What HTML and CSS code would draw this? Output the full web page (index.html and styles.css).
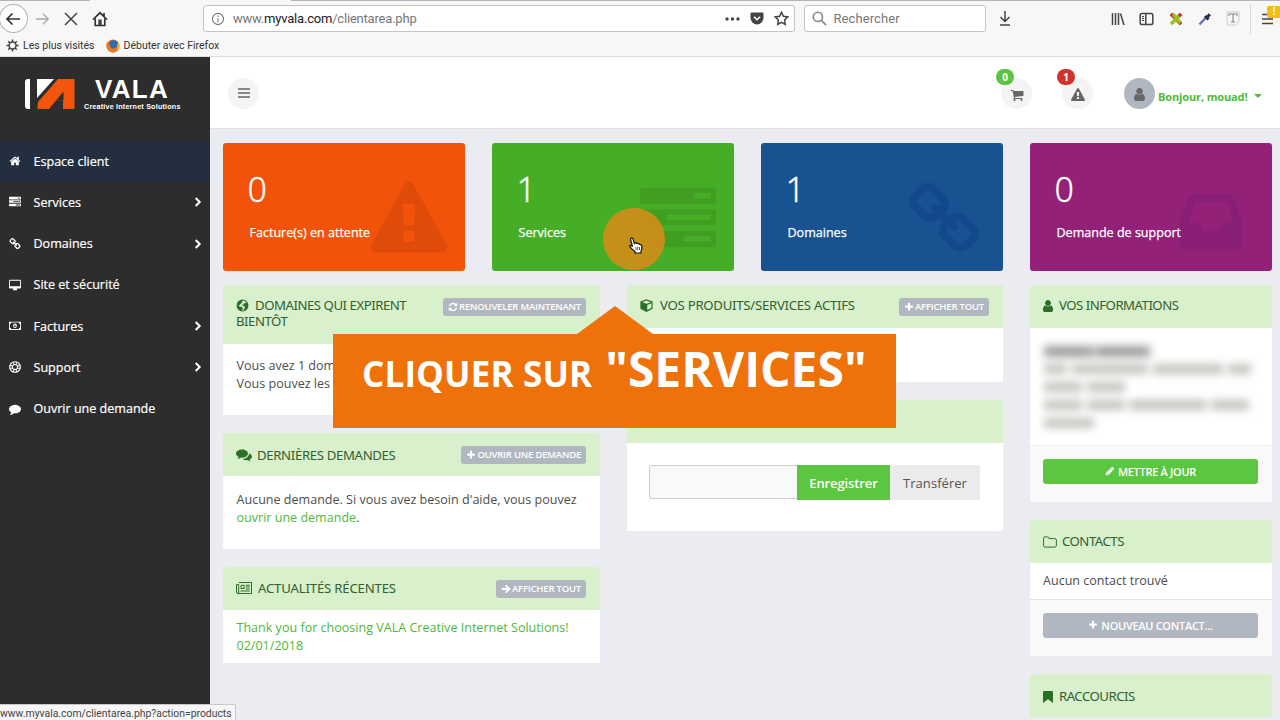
FILE: index.html
```html
<!DOCTYPE html>
<html lang="fr">
<head>
    <meta charset="UTF-8">
    <title>Espace client - VALA</title>
    <link rel="stylesheet" href="styles.css">
</head>
<body>
    <!-- icon set -->
    <svg class="sprite" xmlns="http://www.w3.org/2000/svg">
        <symbol id="i-home" viewBox="0 0 1792 1792"><path d="M1472 992v480q0 26-19 45t-45 19h-384v-384h-256v384h-384q-26 0-45-19t-19-45v-480q0-1 .5-3t.5-3l575-474 575 474q1 2 1 6zm223-69l-62 74q-8 9-21 11h-3q-13 0-21-7l-692-577-692 577q-12 8-24 7-13-2-21-11l-62-74q-8-10-7-23.5t11-21.5l719-599q32-26 76-26t76 26l244 204v-195q0-14 9-23t23-9h192q14 0 23 9t9 23v408l219 182q10 8 11 21.5t-7 23.5z"/></symbol>
        <symbol id="i-tasks" viewBox="0 0 1792 1792"><path fill-rule="evenodd" d="M64 128h1664q64 0 64 64v256q0 64-64 64H64q-64 0-64-64V192q0-64 64-64zm1216 128v128h384V256zM64 640h1664q64 0 64 64v256q0 64-64 64H64q-64 0-64-64V704q0-64 64-64zm576 128v128h1024V768zM64 1152h1664q64 0 64 64v256q0 64-64 64H64q-64 0-64-64v-256q0-64 64-64zm960 128v128h640v-128z"/></symbol>
        <symbol id="i-chain" viewBox="0 0 1792 1792"><path d="M1520 1216q0-40-28-68l-208-208q-28-28-68-28-42 0-72 32 3 3 19 18.5t21.5 21.5 15 19 13 25.5 3.5 27.5q0 40-28 68t-68 28q-15 0-27.5-3.5t-25.5-13-19-15-21.5-21.5-18.5-19q-33 31-33 73 0 40 28 68l206 207q27 27 68 27 40 0 68-26l147-146q28-28 28-67zm-703-705q0-40-28-68l-206-207q-28-28-68-28-39 0-68 27l-147 146q-28 28-28 67 0 40 28 68l208 208q27 27 68 27 42 0 72-31-3-3-19-18.5t-21.5-21.5-15-19-13-25.5-3.5-27.5q0-40 28-68t68-28q15 0 27.5 3.5t25.5 13 19 15 21.5 21.5 18.5 19q33-31 33-73zm895 705q0 120-85 203l-147 146q-83 83-203 83-121 0-204-85l-206-207q-83-83-83-203 0-123 88-209l-88-88q-86 88-208 88-120 0-204-84l-208-208q-84-84-84-204t85-203l147-146q83-83 203-83 121 0 204 85l206 207q83 83 83 203 0 123-88 209l88 88q86-88 208-88 120 0 204 84l208 208q84 84 84 204z"/></symbol>
        <symbol id="i-desktop" viewBox="0 0 14 14"><path fill-rule="evenodd" d="M1.2 1h11.6q1.2 0 1.2 1.2v7.6q0 1.2-1.2 1.2H9l.6 2H4.4L5 11H1.2Q0 11 0 9.8V2.2Q0 1 1.2 1zM1 2v6.6h12V2z"/></symbol>
        <symbol id="i-money" viewBox="0 0 14 14"><path fill-rule="evenodd" d="M0 2h14v9.600H0zM2.600 3Q2.600 4.600 1 4.600V9q1.600 0 1.600 1.600h8.800Q11.400 9 13 9V4.600q-1.600 0-1.600-1.600z"/><path fill-rule="evenodd" d="M7 4.200a2.200 2.600 0 0 1 0 5.200a2.200 2.600 0 0 1 0-5.200zm-.6 1.200v2.300H6v.6h2v-.6h-.5V5.400z"/></symbol>
        <symbol id="i-life" viewBox="0 0 14 14"><circle cx="7" cy="7" r="6.200" fill="none" stroke="currentColor" stroke-width="1.300"/><circle cx="7" cy="7" r="3" fill="none" stroke="currentColor" stroke-width="1.200"/><path d="M5 .8h1v3.600H5zM8 .8h1v3.600H8zM5 9.600h1v3.600H5zM8 9.600h1v3.600H8zM.8 5v1h3.600V5zM.8 8v1h3.600V8zM9.600 5v1h3.600V5zM9.600 8v1h3.600V8z"/></symbol>
        <symbol id="i-comment" viewBox="0 0 1792 1792"><path d="M1792 896q0 174-120 321.500t-326 233-450 85.500q-70 0-145-8-198 175-460 242-49 14-114 22-17 2-30.500-9t-17.500-29q0-14 10-28 60-66 110-125t90-190q-157-89-247.500-220t-90.500-281q0-130 71-248.500t191-204.500 286-136.500 348-50.500q244 0 450 85.500t326 233 120 321.500z"/></symbol>
        <symbol id="i-comments" viewBox="0 0 16 14"><path d="M6 1.500c3.400 0 6 1.800 6 4.100S9.400 9.700 6 9.700l-1-.1c-1.100.9-2.300 1.400-3.700 1.500.7-.6 1.100-1.300 1.300-2.100C1 8.200 0 7 0 5.600 0 3.300 2.600 1.500 6 1.500z"/><path d="M13 5.400c1.800.6 3 1.800 3 3.200 0 1.200-.9 2.300-2.400 3 .2.700.6 1.300 1.200 1.800-1.300-.1-2.500-.6-3.500-1.300-2.100.2-3.900-.4-5-1.400 3.800.1 6.700-2 6.700-5.300z"/></symbol>
        <symbol id="i-warning" viewBox="0 0 1792 1792"><path d="M1024 1375v-190q0-14-9.500-23.500t-22.500-9.500h-192q-13 0-22.500 9.500t-9.500 23.500v190q0 14 9.500 23.500t22.500 9.500h192q13 0 22.500-9.500t9.500-23.500zm-2-374l18-459q0-12-10-19-13-11-24-11h-220q-11 0-24 11-10 7-10 21l17 457q0 10 10 16.500t24 6.500h185q14 0 23.500-6.500t10.500-16.500zm-14-934l768 1408q35 63-2 126-17 29-46.500 46t-63.500 17h-1536q-34 0-63.500-17t-46.500-46q-37-63-2-126l768-1408q17-31 47-49t65-18 65 18 47 49z"/></symbol>
        <symbol id="i-cart" viewBox="0 0 1792 1792"><path d="M704 1536q0 52-38 90t-90 38-90-38-38-90 38-90 90-38 90 38 38 90zm896 0q0 52-38 90t-90 38-90-38-38-90 38-90 90-38 90 38 38 90zm128-1088v512q0 24-16.500 42.500t-40.500 21.500l-1044 122q13 60 13 70 0 16-24 64h920q26 0 45 19t19 45-19 45-45 19h-1024q-26 0-45-19t-19-45q0-11 8-31.500t16-36 21.500-40 15.500-29.500l-177-823h-204q-26 0-45-19t-19-45 19-45 45-19h256q16 0 28.500 6.500t19.500 15.500 13 24.500 8 26 5.500 29.500 4.500 26h1201q26 0 45 19t19 45z"/></symbol>
        <symbol id="i-user" viewBox="256 128 1280 1536"><path d="M1536 1399q0 109-62.500 187t-150.500 78h-854q-88 0-150.500-78t-62.500-187q0-85 8.500-160.500t31.500-152 58.500-131 94-89 134.500-34.500q131 128 313 128t313-128q76 0 134.500 34.500t94 89 58.500 131 31.500 152 8.500 160.500zm-256-887q0 159-112.500 271.500t-271.500 112.500-271.500-112.500-112.500-271.500 112.500-271.500 271.500-112.500 271.500 112.500 112.500 271.500z"/></symbol>
        <symbol id="i-plus" viewBox="0 0 1792 1792"><path d="M1600 736v192q0 40-28 68t-68 28h-416v416q0 40-28 68t-68 28h-192q-40 0-68-28t-28-68v-416h-416q-40 0-68-28t-28-68v-192q0-40 28-68t68-28h416v-416q0-40 28-68t68-28h192q40 0 68 28t28 68v416h416q40 0 68 28t28 68z"/></symbol>
        <symbol id="i-refresh" viewBox="0 0 1792 1792"><path d="M1639 1056q0 5-1 7-64 268-268 434.500t-478 166.500q-146 0-282.500-55t-243.500-157l-129 129q-19 19-45 19t-45-19-19-45v-448q0-26 19-45t45-19h448q26 0 45 19t19 45-19 45l-137 137q71 66 161 102t187 36q134 0 250-65t186-179q11-17 53-117 8-23 30-23h192q13 0 22.500 9.500t9.500 22.500zm25-800v448q0 26-19 45t-45 19h-448q-26 0-45-19t-19-45 19-45l138-138q-148-137-349-137-134 0-250 65t-186 179q-11 17-53 117-8 23-30 23h-199q-13 0-22.500-9.500t-9.500-22.500v-7q65-268 270-434.500t480-166.500q146 0 284 55.500t245 156.500l130-129q19-19 45-19t45 19 19 45z"/></symbol>
        <symbol id="i-pencil" viewBox="0 0 1792 1792"><path d="M491 1536l91-91-235-235-91 91v107h128v128h107zm523-928q0-22-22-22-10 0-17 7l-542 542q-7 7-7 17 0 22 22 22 10 0 17-7l542-542q7-7 7-17zm-54-192l416 416-832 832h-416v-416zm683 96q0 53-37 90l-166 166-416-416 166-165q36-38 90-38 53 0 91 38l235 234q37 39 37 91z"/></symbol>
        <symbol id="i-arrow" viewBox="0 0 14 14"><path fill="none" stroke="currentColor" stroke-width="2.600" d="M1 7h10.500M6.500 1.800L11.700 7l-5.200 5.200"/></symbol>
        <symbol id="i-globe" viewBox="0 0 14 14"><path fill-rule="evenodd" d="M7 .6a6.400 6.400 0 1 1 0 12.800A6.400 6.400 0 0 1 7 .6zM8 1.700l-1.600.8.500.9-1.500.8-.2 1.300-1 .2.300 1.200-1.600-.6.200 1.300 1.400.7 1.600.2 1.400 1.400-.8 1.600-.6 1 1.700-.2 1.500-2.300.3-1.700-2.200-1.200-.8-.1.400-1.300 1.500.3.600-1.300 1.600-.7.8.5-1-1.600z"/></symbol>
        <symbol id="i-cube" viewBox="0 0 14 14"><path fill-rule="evenodd" d="M7 .2l6.600 2.500v7.800L7 13.900.4 10.500V2.700zM7 1.600L2.300 3.400 7 5.100l4.700-1.700zm.8 4.800v5.500l4.500-2.300V4.700z"/></symbol>
        <symbol id="i-news" viewBox="0 0 16 14"><path fill="none" stroke="currentColor" d="M2.700 1.500h12.800v11H2Q.5 12.500.5 11V3.500h2.200V11q0 1.500-1 1.500"/><path fill="none" stroke="currentColor" d="M5 4.300h3.200v3.200H5z"/><path d="M9.800 3.800h4v1h-4zM9.800 5.600h4v1h-4zM9.800 7.400h4v1h-4zM4.500 9.600h9.300v1H4.500z"/></symbol>
        <symbol id="i-folder" viewBox="0 0 14 12"><path fill="none" stroke="currentColor" stroke-width="1" d="M2 .9h2.600Q6 .9 6 2.600h5.700q1.700 0 1.700 1.600v5.300q0 1.600-1.700 1.600H2.200Q.6 11.100.6 9.500V2.300Q.6.900 2 .9z"/></symbol>
        <symbol id="i-bookmark" viewBox="0 0 10 12"><path d="M1 0h8q1 0 1 1v11L5 8.200 0 12V1q0-1 1-1z"/></symbol>
        <symbol id="i-inbox" viewBox="0 0 64 56"><path fill-rule="evenodd" d="M14 1h36q3 0 4 3l9.500 25V53q0 3-3 3H3.500q-3 0-3-3V29L10 4q1-3 4-3zm2 8L9 30h12l4 8h14l4-8h12L48 9z"/></symbol>
        <symbol id="i-chevron" viewBox="0 0 8 10"><path fill="none" stroke="currentColor" stroke-width="2" d="M1.700 1l4 4-4 4"/></symbol>
    </svg>

    <div class="browser">
        <div class="tabline"><span></span><span></span></div>
        <div class="toolbar">
            <div class="back"><svg width="16" height="14" viewBox="0 0 16 14"><path d="M15 7H2M7.500 1.500L2 7l5.500 5.500"/></svg></div>
            <svg class="forward" width="15" height="14" viewBox="0 0 16 14"><path d="M1 7h13M8.500 1.500L14 7l-5.500 5.500"/></svg>
            <svg class="stop" width="14" height="14" viewBox="0 0 14 14"><path d="M1 1l12 12M13 1L1 13"/></svg>
            <svg class="house" width="16" height="16" viewBox="0 0 16 16"><path d="M1 8.500L8 1.800l7 6.700M3.200 7.500v7h9.600v-7M12 2v3"/><path class="solid" d="M6.300 8.500h3.400V14H6.300z"/></svg>
            <div class="urlbar">
                <svg width="14" height="14" viewBox="0 0 14 14"><circle cx="7" cy="7" r="5.600"/><path d="M7 6.200v4M7 3.500v1.400"/></svg>
                <span class="url">www.<b>myvala.com</b>/clientarea.php</span>
                <svg class="dots" width="15" height="4" viewBox="0 0 15 4"><circle cx="2" cy="2" r="1.700"/><circle cx="7.500" cy="2" r="1.700"/><circle cx="13" cy="2" r="1.700"/></svg>
                <svg class="pocket" width="14" height="13" viewBox="0 0 14 13"><path class="solid" d="M1.500.5h11Q13.500.5 13.500 1.500V6a6.500 6.500 0 0 1-13 0V1.500q0-1 1-1z"/><path class="tick" d="M4 4.800l3 3 3-3"/></svg>
                <svg class="star" width="15" height="15" viewBox="0 0 15 15"><path d="M7.500 1.300l1.900 4 4.300.6-3.100 3.100.7 4.400-3.800-2.100-3.800 2.100.7-4.400L1.300 5.900l4.300-.6z"/></svg>
            </div>
            <div class="searchbar">
                <svg width="15" height="15" viewBox="0 0 14 14"><circle cx="5.500" cy="5.500" r="4.300"/><path d="M8.700 8.700l4.500 4.500"/></svg>
                <span>Rechercher</span>
            </div>
            <svg class="download" width="12" height="15" viewBox="0 0 12 15"><path d="M6 0v10M1.500 6L6 10.500 10.500 6M1 14h10"/></svg>
            <div class="tools">
                <svg width="14" height="14" viewBox="0 0 14 14"><path d="M1.500 1v12M4.500 1v12M7.500 1v12M9.500 1.500l3.500 11.500"/></svg>
                <svg width="15" height="14" viewBox="0 0 15 14"><rect x="1.200" y="1.500" width="12.600" height="11" rx="1.800"/><path d="M6.800 2v10"/><path class="thin" d="M3 4.500h2M3 6.500h2M3 8.500h2"/></svg>
                <svg class="cross" width="16" height="16" viewBox="0 0 16 16"><path class="red" d="M3 3l10 10M13 3L9 7"/><path class="lime" d="M3 13L11 5M5 3l8 10"/><path class="red" d="M12 4l1-1M3 3l1 1M12 12l1 1"/></svg>
                <svg class="picker" width="14" height="15" viewBox="0 0 14 15"><path class="glass" d="M1.500 13.500l6-6.500"/><path class="bulb" d="M7 5l3.500 3.500M9 6.500l2.800-3.300"/></svg>
                <svg class="texttool" width="14" height="15" viewBox="0 0 14 15"><path d="M1 1h12v9l-3.500 4H1z" class="page-sheet"/><path d="M3 5V3h8v2M7 3v8M5 11h4"/></svg>
            </div>
            <div class="menu">
                <svg width="14" height="14" viewBox="0 0 14 14"><path d="M0 2.500h11M0 7h11M0 11.500h11"/></svg>
                <i>!</i>
            </div>
        </div>
        <div class="bookmarks">
            <svg width="13" height="13" viewBox="0 0 13 13"><circle cx="6.500" cy="6.500" r="3.500"/><path d="M6.500.5V3M6.500 10v2.500M.5 6.500H3M10 6.500h2.500M2.200 2.200L4 4M9 9l1.800 1.800M2.200 10.800L4 9M9 4l1.800-1.800"/></svg>
            <span class="visited">Les plus visités</span>
            <svg class="firefox" width="14" height="14" viewBox="0 0 14 14"><circle cx="7" cy="7" r="6.500" fill="#e8641c"/><circle cx="7.700" cy="5.800" r="4.500" fill="#2a6fb0"/><path d="M1 3q1 3 3.500 3.500Q4 10 8 9.500q3.500-.5 4.500-5.500 2 6-2 8.500-5 2.500-8.500-1.500Q-.5 7.500 1 3z" fill="#ef7a1c"/><path d="M12 3q2 4-1 8 0-4 1-8z" fill="#f9c52e"/></svg>
            <span class="start">Débuter avec Firefox</span>
        </div>
    </div>

    <div class="page">
        <aside class="sidebar">
            <div class="logo">
                <svg width="51" height="32" viewBox="0 0 51 32"><path fill="#fff" d="M5 1v30H3q-3 0-3-3V4q0-3 3-3zM12 1h17L12 20z"/><path fill="#f2560d" d="M33 1h16.500v30H38v-8.500h-7L24 31H12.500l.5-7z"/><path fill="#2d2d2d" d="M31 22.500l7.500-9v9z"/></svg>
                <div class="brand"><strong>VALA</strong><small>Creative Internet Solutions</small></div>
            </div>
            <nav>
                <a class="active"><svg><use href="#i-home"/></svg><span>Espace client</span></a>
                <a><svg><use href="#i-tasks"/></svg><span>Services</span><svg class="chev"><use href="#i-chevron"/></svg></a>
                <a><svg><use href="#i-chain"/></svg><span>Domaines</span><svg class="chev"><use href="#i-chevron"/></svg></a>
                <a><svg><use href="#i-desktop"/></svg><span>Site et sécurité</span></a>
                <a><svg><use href="#i-money"/></svg><span>Factures</span><svg class="chev"><use href="#i-chevron"/></svg></a>
                <a><svg><use href="#i-life"/></svg><span>Support</span><svg class="chev"><use href="#i-chevron"/></svg></a>
                <a><svg><use href="#i-comment"/></svg><span>Ouvrir une demande</span></a>
            </nav>
        </aside>

        <div class="main">
            <header class="topbar">
                <div class="round burger"><i></i><i></i><i></i></div>
                <div class="round cart"><svg><use href="#i-cart"/></svg><em>0</em></div>
                <div class="round alert"><svg><use href="#i-warning"/></svg><em>1</em></div>
                <div class="round avatar"><svg><use href="#i-user"/></svg></div>
                <span class="hello">Bonjour, mouad!</span>
                <i class="caret"></i>
            </header>

            <div class="tiles">
                <div class="tile orange"><b>0</b><span>Facture(s) en attente</span><svg><use href="#i-warning"/></svg></div>
                <div class="tile green"><b>1</b><span>Services</span><svg><use href="#i-tasks"/></svg></div>
                <div class="tile blue"><b>1</b><span>Domaines</span><svg><use href="#i-chain"/></svg></div>
                <div class="tile purple"><b>0</b><span>Demande de support</span><svg><use href="#i-inbox"/></svg></div>
            </div>

            <div class="columns">
                <div class="col">
                    <section class="panel expiring">
                        <h3><span class="title"><svg><use href="#i-globe"/></svg>DOMAINES QUI EXPIRENT<br>BIENTÔT</span><a class="tag"><svg><use href="#i-refresh"/></svg>RENOUVELER MAINTENANT</a></h3>
                        <div class="body"><p>Vous avez 1 dom<br>Vous pouvez les</p></div>
                    </section>
                    <section class="panel requests">
                        <h3><span class="title"><svg class="wide"><use href="#i-comments"/></svg>DERNIÈRES DEMANDES</span><a class="tag"><svg><use href="#i-plus"/></svg>OUVRIR UNE DEMANDE</a></h3>
                        <div class="body"><p>Aucune demande. Si vous avez besoin d'aide, vous pouvez<br><a>ouvrir une demande</a>.</p></div>
                    </section>
                    <section class="panel news">
                        <h3><span class="title"><svg class="wide"><use href="#i-news"/></svg>ACTUALITÉS RÉCENTES</span><a class="tag"><svg><use href="#i-arrow"/></svg>AFFICHER TOUT</a></h3>
                        <div class="body"><p><a>Thank you for choosing VALA Creative Internet Solutions!<br>02/01/2018</a></p></div>
                    </section>
                </div>
                <div class="col">
                    <section class="panel products">
                        <h3><span class="title"><svg><use href="#i-cube"/></svg>VOS PRODUITS/SERVICES ACTIFS</span><a class="tag"><svg><use href="#i-plus"/></svg>AFFICHER TOUT</a></h3>
                        <div class="body"></div>
                    </section>
                    <section class="panel register">
                        <h3></h3>
                        <div class="body"><input type="text"><button class="save">Enregistrer</button><button class="transfer">Transférer</button></div>
                    </section>
                </div>
                <div class="col">
                    <section class="panel infos">
                        <h3><span class="title"><svg class="slim"><use href="#i-user"/></svg>VOS INFORMATIONS</span></h3>
                        <div class="body">
                            <div class="hidden-lines">
                                <div class="strong"><i class="w3"></i><i class="w4"></i></div>
                                <div><i class="w1"></i><i class="w5"></i><i class="w6"></i><i class="w1"></i></div>
                                <div><i class="w2"></i><i class="w2"></i></div>
                                <div><i class="w2"></i><i class="w2"></i><i class="w5"></i><i class="w2"></i></div>
                                <div><i class="w3"></i></div>
                            </div>
                        </div>
                        <footer><button class="wide-btn update"><svg><use href="#i-pencil"/></svg>METTRE À JOUR</button></footer>
                    </section>
                    <section class="panel contacts">
                        <h3><span class="title"><svg class="folder"><use href="#i-folder"/></svg>CONTACTS</span></h3>
                        <div class="body"><p>Aucun contact trouvé</p></div>
                        <footer><button class="wide-btn"><svg><use href="#i-plus"/></svg>NOUVEAU CONTACT...</button></footer>
                    </section>
                    <section class="panel shortcuts">
                        <h3><span class="title"><svg class="mark"><use href="#i-bookmark"/></svg>RACCOURCIS</span></h3>
                    </section>
                </div>
            </div>
        </div>
    </div>

    <!-- click highlight, callout and link status lie over the page -->
    <div class="halo"></div>
    <svg class="hand" width="14" height="17" viewBox="0 0 14 17"><path fill="#fff" stroke="#111" stroke-width="1.200" d="M3.500 9.500L1.700 2.800Q1.500 1 2.700.9 3.700.8 4.100 2.300l1.200 4q.4-1 1.500-.6l.4.700q1-.7 1.900.3 1.100-.4 1.800.8 1.800-.1 1.900 2.200.2 3-.8 4.300v2H6v-1.400Q3.500 12.800.9 9.900q-.6-1.300.6-1.500 1 0 2 1.100z"/><path stroke="#111" stroke-width=".7" d="M7 10v3M8.800 10v3M10.500 10v3"/></svg>
    <div class="callout"><span>CLIQUER SUR</span><strong>"SERVICES"</strong></div>
    <div class="status">www.myvala.com/clientarea.php?action=products</div>
</body>
</html>
```
FILE: styles.css
```css
* { box-sizing: border-box; }
body { margin: 0; width: 1280px; height: 720px; overflow: hidden; position: relative; font-family: "Open Sans", sans-serif; font-size: 12.55px; color: #4d4d4d; background: #ebecf1; }
svg { fill: currentColor; flex: none; }
.sprite { position: absolute; width: 0; height: 0; }

/* browser chrome */
.browser { height: 57px; background: #f7f7f7; border-bottom: 1px solid #dedede; font-family: Roboto, sans-serif; color: #333; }
.browser svg { fill: none; stroke: #444; stroke-width: 1.5; }
.browser svg .solid { fill: #444; stroke: none; }
.tabline { height: 1px; display: flex; justify-content: space-between; }
.tabline span { height: 1px; width: 90px; background: #b5b5b5; }
.tabline span + span { width: 989px; }
.toolbar { height: 35px; display: flex; align-items: center; }
.back { width: 29px; height: 29px; margin-left: -1px; border: 1px solid #b5b5b5; border-radius: 50%; background: #fff; display: flex; align-items: center; justify-content: center; }
.browser .back svg { stroke: #333; stroke-width: 1.7; }
.forward { margin-left: 7px; }
.browser .forward { stroke: #aaa; }
.stop { margin-left: 14px; }
.house { margin-left: 14px; }
.browser .house { stroke: #333; stroke-width: 1.7; }
.urlbar, .searchbar { height: 27px; background: #fff; border: 1px solid #c4c4c4; border-radius: 3px; display: flex; align-items: center; font-size: 13px; }
.urlbar { width: 594px; margin-left: 95px; padding: 0 7px; color: #777; }
.browser .urlbar > svg:first-child { stroke: #777; stroke-width: 1.1; }
.urlbar b { font-weight: 400; color: #222; }
.url { margin-left: 8px; margin-right: auto; letter-spacing: -.2px; }
.browser .dots { fill: #444; stroke: none; }
.pocket { margin-left: 10px; }
.browser .pocket .tick { stroke: #fff; }
.star { margin-left: 10px; margin-right: -2px; }
.searchbar { width: 182px; margin-left: 9px; padding: 0 7px; color: #777; }
.browser .searchbar svg { stroke: #888; }
.searchbar span { margin-left: 6px; letter-spacing: .1px; }
.download { margin-left: 13px; }
.tools { display: flex; align-items: center; gap: 14px; margin-left: 100px; }
.browser .tools svg .thin { stroke-width: 1; }
.browser .cross path { stroke-width: 3.5; }
.browser .cross .red { stroke: #c9352c; }
.browser .cross .lime { stroke: #9abf25; }
.browser .picker .glass { stroke: #6a6fd0; stroke-width: 2.5; }
.browser .picker .bulb { stroke: #27304a; stroke-width: 3; }
.browser .texttool path { stroke: #888; stroke-width: 1.1; }
.browser .texttool .page-sheet { stroke: #ccc; stroke-width: 1; }
.menu { height: 30px; border-left: 1px solid #d8d8d8; margin-left: 10px; padding-left: 11px; width: 30px; display: flex; align-items: center; position: relative; overflow: hidden; }
.menu i { position: absolute; left: 16px; top: 2px; width: 14px; height: 12px; border-radius: 2px; background: #f5bd13; color: #fff; font: bold 10px/12px Roboto, sans-serif; text-align: center; }
.bookmarks { height: 19px; display: flex; align-items: center; padding-left: 6px; font-size: 10.5px; }
.bookmarks span { margin-left: 4px; }
.firefox { margin-left: 11px; }
.browser .firefox { stroke: none; }
.bookmarks .start { margin-left: 4px; }

.page { display: flex; height: 663px; overflow: hidden; }

/* sidebar */
.sidebar { width: 210px; background: #2d2d2d; color: #fff; }
.logo { height: 83.500px; padding: 21px 0 0 25px; display: flex; }
.brand { margin-left: 8px; font-family: "Liberation Sans", sans-serif; font-weight: bold; }
.brand strong { display: block; font-size: 26px; line-height: 24px; padding-left: 11px; letter-spacing: 1.3px; margin-top: -1px; }
.brand small { display: block; font-size: 7.2px; line-height: 9px; letter-spacing: .19px; white-space: nowrap; margin-top: 1px; }
.sidebar a { height: 41.250px; display: flex; align-items: center; padding: 0 8px 0 9px; -webkit-text-stroke: .2px #fff; }
.sidebar a.active { background: #232e40; }
.sidebar a svg { width: 12px; height: 12px; }
.sidebar a span { margin-left: 12.500px; }
.sidebar a .chev { width: 8px; height: 10px; margin-left: auto; }

/* top bar */
.main { flex: 1; min-width: 0; }
.topbar { height: 72px; background: #fff; border-bottom: 1px solid #e2e3ea; display: flex; align-items: center; padding-left: 18px; }
.round { width: 31px; height: 31px; border-radius: 50%; background: #f4f4f4; color: #666; display: flex; align-items: center; justify-content: center; position: relative; margin-top: 1px; }
.round svg { width: 14px; height: 14px; margin-top: 3px; }
.round.avatar svg { width: 11px; height: 13px; margin-top: 2px; }
.burger { flex-direction: column; gap: 2px; }
.burger i { width: 12px; height: 2px; background: #888; }
.cart { margin-left: 742px; }
.alert { margin-left: 30px; }
.round em { position: absolute; left: -5px; top: -9px; width: 18px; height: 16px; border-radius: 8px; background: #5bc341; color: #fff; font: bold 10px/16px "Open Sans", sans-serif; text-align: center; }
.alert em { background: #d2322d; }
.avatar { margin-left: 31px; background: #b1b7c1; }
.hello { margin: 7px 0 0 3px; font-size: 11px; letter-spacing: -.13px; font-weight: bold; color: #4fbb39; }
.caret { margin: 7px 0 0 7px; border: 4px solid transparent; border-top-color: #4fbb39; border-bottom: 0; }

/* stat tiles */
.tiles { display: grid; grid-template-columns: repeat(4, 242px); gap: 27px; padding: 14px 0 0 13px; }
.tile { height: 128px; border-radius: 3px; color: #fff; padding: 22px 26.5px; position: relative; }
.tile b { display: block; font-size: 34px; line-height: 48px; font-weight: 300; font-family: "Noto Sans", sans-serif; margin-left: -2px; -webkit-text-stroke: .3px #fff; }
.tile span { display: block; line-height: 18px; margin-top: 11px; -webkit-text-stroke: .25px #fff; }
.tile svg { position: absolute; width: 76px; height: 76px; right: 18px; top: 39px; color: rgba(0, 0, 0, .08); }
.orange { background: #f2520a; }
.green { background: #46ad27; }
.blue { background: #185291; }
.purple { background: #932178; }
.blue svg { right: 21px; color: rgba(0, 40, 120, .2); }
.purple svg { width: 64px; height: 56px; top: 50px; right: 29px; color: rgba(60, 10, 100, .12); }

/* panels */
.columns { display: grid; grid-template-columns: 377px 376px 242px; gap: 27px; padding: 14px 0 0 13px; }
.panel { background: #fff; border-radius: 3px 3px 0 0; margin-bottom: 18px; }
.panel h3 { margin: 0; height: 43px; padding: 13px 14px 0 13px; background: #d8f0cc; border-radius: 3px 3px 0 0; display: flex; align-items: flex-start; justify-content: space-between; font-family: "Noto Sans", sans-serif; font-weight: 400; font-size: 13.2px; line-height: 16px; color: #34602f; }
.title { letter-spacing: -.5px; white-space: nowrap; }
.title svg { width: 13px; height: 13px; margin-right: 6px; vertical-align: -2px; color: #2c7028; }
.title .wide { width: 16px; height: 14px; margin-right: 5px; }
.title .slim { width: 10px; height: 12px; }
.title .folder { width: 14px; height: 12px; margin-right: 5px; }
.title .mark { width: 10px; height: 12px; }
.expiring .title, .products .title, .infos .title { margin-top: -1px; }
.expiring .title { letter-spacing: -.47px; }
.requests .title { margin-top: 1px; letter-spacing: -.35px; }
.news .title { letter-spacing: -.2px; }
.news .wide { margin-right: 6px; }
.products .title { letter-spacing: -.27px; }
.products .title svg { margin-right: 7px; }
.shortcuts .title { margin-top: 1px; }
.tag { height: 18px; border-radius: 3px; background: #b1b7c1; color: #fff; font: 600 9.5px/18px "Open Sans", sans-serif; letter-spacing: -.2px; padding: 0 5px; white-space: nowrap; display: flex; align-items: center; gap: 1px; }
.tag svg { width: 10px; height: 10px; }
.panel .body { padding: 12px 14px 0 13.5px; line-height: 18px; }
.panel p { margin: 0; white-space: nowrap; }
.panel p a { color: #4fb83c; }
.expiring h3 { height: 59px; }
.expiring .body { height: 71px; padding-top: 13px; }
.requests { height: 116px; }
.requests .body { padding-top: 15px; }
.news .body { height: 53px; padding-top: 9px; }
.products .body { height: 54px; }
.register .body { height: 88px; display: flex; padding: 22px 22px 0; }
.register input { width: 148px; height: 34px; border: 1px solid #d0d0d0; border-right: 0; border-radius: 3px 0 0 3px; background: #f9f9f9; }
.register button { height: 35px; border: 0; padding: 0; font: 13px "Open Sans", sans-serif; letter-spacing: .05px; }
.register .save { width: 93px; background: #5bc741; color: #fff; font-weight: 600; letter-spacing: -.1px; }
.register .transfer { width: 90px; background: #ebebeb; color: #555; border-radius: 0 3px 3px 0; }
.panel footer { height: 57px; padding: 13px 14px 0 13px; background: #f9f9f9; border-top: 1px solid #e4e4e4; }
.infos .body { height: 117px; padding-top: 14px; }
.infos footer { border-top-color: #efefef; }
.wide-btn { width: 100%; height: 25px; border: 0; border-radius: 3px; background: #b1b7c1; color: #fff; font: 600 11px "Open Sans", sans-serif; letter-spacing: -.3px; padding: 0 6px 1px; display: flex; align-items: center; justify-content: center; gap: 3px; }
.wide-btn svg { width: 10px; height: 10px; }
.update { background: #5bc741; }
.contacts .body { height: 36px; padding: 9px 0 0 13px; }

/* masked customer details */
.hidden-lines { filter: blur(4.5px); width: 207px; }
.hidden-lines div { height: 18px; display: flex; align-items: center; gap: 5px; }
.hidden-lines i { height: 10px; background: #c3c3bf; }
.hidden-lines .strong { gap: 2px; }
.hidden-lines .strong i { height: 11px; background: #9c9c9c; }
.w1 { width: 23px; }
.w2 { width: 38px; }
.w3 { width: 50px; }
.w4 { width: 54px; }
.w5 { width: 76px; }
.w6 { width: 70px; }

/* overlays */
.halo { position: absolute; left: 603px; top: 208px; width: 62px; height: 62px; border-radius: 50%; background: rgba(220, 139, 24, .85); }
.hand { position: absolute; left: 629px; top: 237px; }
.callout { position: absolute; left: 333px; top: 306px; width: 563px; height: 122px; padding: 28px 0 0 29px; background: #ee710a; clip-path: polygon(0 28px, 244px 28px, 282px 0, 320px 28px, 100% 28px, 100% 100%, 0 100%); color: #fff; display: flex; align-items: baseline; white-space: nowrap; font-weight: 700; }
.callout span { font-size: 35px; line-height: 70px; letter-spacing: .15px; }
.callout strong { font-size: 48px; font-weight: 700; line-height: 70px; margin-left: 13px; }
.status { position: absolute; left: 0; bottom: 0; width: 236px; height: 16px; background: #f6f6f6; border: 1px solid #c8c8c8; border-left: 0; border-bottom: 0; border-radius: 0 2px 0 0; font: 10.4px/17px Roboto, sans-serif; color: #444; white-space: nowrap; }
```
